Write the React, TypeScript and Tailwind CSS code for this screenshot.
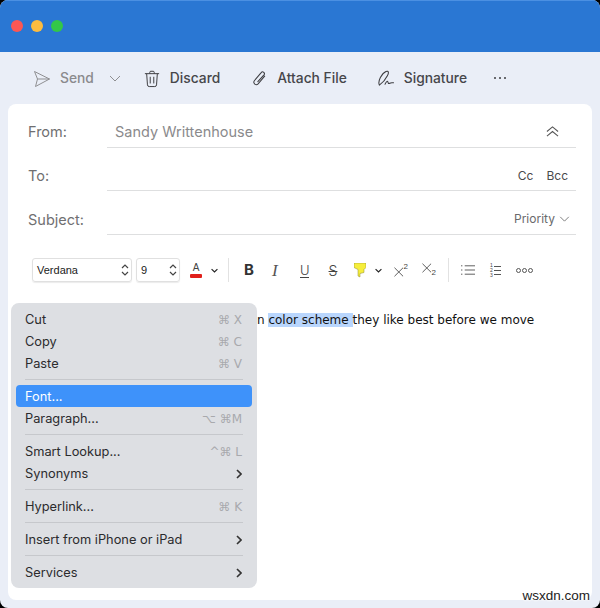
import React from 'react';

const sans = "font-['Inter','Noto_Sans',sans-serif]";

type MenuRow = { label: string; keys?: string; arrow?: boolean; active?: boolean } | 'sep';

const menu: MenuRow[] = [
  { label: 'Cut', keys: '⌘ X' },
  { label: 'Copy', keys: '⌘ C' },
  { label: 'Paste', keys: '⌘ V' },
  'sep',
  { label: 'Font...', active: true },
  { label: 'Paragraph...', keys: '⌥ ⌘M' },
  'sep',
  { label: 'Smart Lookup...', keys: '^⌘ L' },
  { label: 'Synonyms', arrow: true },
  'sep',
  { label: 'Hyperlink...', keys: '⌘ K' },
  'sep',
  { label: 'Insert from iPhone or iPad', arrow: true },
  'sep',
  { label: 'Services', arrow: true },
];

const Chevron = ({ className = '', weight = 1 }: { className?: string; weight?: number }) => (
  <svg viewBox="0 0 12 7" className={className} fill="none" stroke="currentColor" strokeWidth={weight}>
    <path d="M1 1l5 5 5-5" />
  </svg>
);

const Stepper = () => (
  <svg viewBox="0 0 8 14" className="w-[8px] h-[14px] text-[#444]" fill="none" stroke="currentColor" strokeWidth="1.2">
    <path d="M1 5l3-3 3 3M1 9l3 3 3-3" />
  </svg>
);

const Field = ({ label, height, pad, labelPad = 'pt-[18px]', children }: { label: string; height: string; pad: string; labelPad?: string; children?: React.ReactNode }) => (
  <div className={`flex pl-[20px] pr-[16px] ${height}`}>
    <div className={`w-[79px] text-[14.5px] leading-[20px] text-[#6f6f71] ${labelPad}`}>{label}</div>
    <div className={`flex-1 flex items-center justify-between border-b border-[#dedfe0] ${pad}`}>{children}</div>
  </div>
);

const Sep = () => <div className="w-px h-[24px] bg-[#e2e2e2]" />;

const CrossIcon = () => (
  <svg viewBox="0 0 10 10" className="w-[10px] h-[10px] text-[#444]" fill="none" stroke="currentColor" strokeWidth=".9">
    <path d="M.5.5l9 9M9.500.5l-9 9" />
  </svg>
);

export default function App() {
  return (
    <div className={`w-[600px] h-[608px] bg-black relative overflow-hidden ${sans}`}>
      <div className="h-full rounded-[8px] bg-[#eaeef7] overflow-hidden flex flex-col">
        <div className="h-[52px] bg-[#2a77d3] border-t border-[#4b90e2] flex items-center pl-[11px] pb-[1px] gap-[8px] shrink-0">
          <span className="w-[12px] h-[12px] rounded-full bg-[#fc5753]" />
          <span className="w-[12px] h-[12px] rounded-full bg-[#fdbc40]" />
          <span className="w-[12px] h-[12px] rounded-full bg-[#33c748]" />
        </div>

        <div className="h-[52px] flex items-center pl-[33px] pt-[1px] text-[13.8px] font-medium text-[#46464a] shrink-0">
          <svg viewBox="0 0 18 18" className="w-[18px] h-[18px] text-[#8f8f92]" fill="none" stroke="currentColor" strokeWidth="1">
            <path d="M1.500 1.500L16.500 9 2.500 16.500 4.500 9zM4.500 9h12" strokeLinejoin="round" />
          </svg>
          <span className="ml-[9px] text-[#8a8a8d]">Send</span>
          <Chevron className="w-[12px] h-[7px] ml-[15px] text-[#8f8f92]" />
          <svg viewBox="0 0 18 20" className="w-[16px] h-[18px] ml-[23px] text-[#3c3c40]" fill="none" stroke="currentColor" strokeWidth="1.100">
            <path d="M1 4h16M6.500 4V2.500A1.200 1.200 0 017.700 1.300h2.600a1.200 1.200 0 011.200 1.200V4M3 4l.9 12.600a2 2 0 002 1.900h6.200a2 2 0 002-1.900L15 4M7 7.500v7.500M11 7.500v7.500" />
          </svg>
          <span className="ml-[10px]">Discard</span>
          <svg viewBox="0 0 16 18" className="w-[15px] h-[17px] ml-[32px] text-[#3c3c40]" fill="none" stroke="currentColor" strokeWidth="1.100">
            <path d="M13.500 6.500l-7 8.200a2.600 2.600 0 01-4-3.300l7.300-8.700a1.900 1.900 0 013 2.400L6.200 12.300" strokeLinecap="round" />
          </svg>
          <span className="ml-[10px]">Attach File</span>
          <svg viewBox="0 0 18 18" className="w-[17px] h-[17px] ml-[30px] text-[#3c3c40]" fill="none" stroke="currentColor" strokeWidth="1.100">
            <path d="M2.500 16C.5 12 5 3.500 9.500 1.500c2.500-1 3.500 1 1.500 4.500-1.500 3-5 7.500-8.500 10zM8.500 15c1-2 2.500-4 3-2.500s.5 2.500 2 1.500 2.500-.5 4-.5" strokeLinecap="round" strokeLinejoin="round" />
          </svg>
          <span className="ml-[10px]">Signature</span>
          <span className="flex gap-[3px] ml-[27px] -mt-[2px]">
            <span className="w-[2px] h-[2px] rounded-full bg-[#3c3c40]" />
            <span className="w-[2px] h-[2px] rounded-full bg-[#3c3c40]" />
            <span className="w-[2px] h-[2px] rounded-full bg-[#3c3c40]" />
          </span>
        </div>

        <div className="mx-[8px] h-[496px] bg-white rounded-[8px] shrink-0">
          <Field label="From:" height="h-[44px]" pad="pt-[12px] pl-[8px] pr-[17px]">
            <span className="text-[14.5px] text-[#8a8a8c]">Sandy Writtenhouse</span>
            <svg viewBox="0 0 14 14" className="w-[13px] h-[13px] text-[#555]" fill="none" stroke="currentColor" strokeWidth="1.100">
              <path d="M1 7l6-5 6 5M1 12l6-5 6 5" />
            </svg>
          </Field>
          <Field label="To:" height="h-[43px]" pad="pt-[14px]">
            <span />
            <span className="flex gap-[13px] pr-[8px] text-[12px] text-[#4a4a4c]">
              <span>Cc</span>
              <span>Bcc</span>
            </span>
          </Field>
          <Field label="Subject:" height="h-[44px]" pad="pt-[13px]" labelPad="pt-[19px]">
            <span />
            <span className="flex items-center gap-[4px] pr-[6px] text-[12px] text-[#6a6a6c]">
              Priority
              <Chevron className="w-[11px] h-[6px]" />
            </span>
          </Field>

          <div className="h-[36px] mt-[17px] flex items-center pl-[24px] font-['Liberation_Sans',sans-serif]">
            <div className="w-[100px] h-[24px] rounded-[3px] border border-[#e0e0e0] shadow-[0_1px_1px_rgba(0,0,0,0.08)] flex items-center justify-between pl-[4px] pr-[2px] text-[11px] text-[#222]">
              Verdana
              <Stepper />
            </div>
            <div className="w-[44px] h-[24px] ml-[4px] rounded-[3px] border border-[#e0e0e0] shadow-[0_1px_1px_rgba(0,0,0,0.08)] flex items-center justify-between pl-[4px] pr-[2px] text-[11px] text-[#222]">
              9
              <Stepper />
            </div>
            <span className="w-[12px] ml-[10px] flex flex-col items-center">
              <span className="text-[10px] leading-[9px] text-[#444]">A</span>
              <span className="w-[12px] h-[4px] mt-[2px] rounded-[1px] bg-[#e0201b]" />
            </span>
            <Chevron className="w-[7px] h-[5px] ml-[9px] text-[#222]" weight={2} />
            <span className="ml-[10px]"><Sep /></span>
            <span className="ml-[15px] w-[10px] text-[15px] font-bold text-[#333] font-['Inter',sans-serif]">B</span>
            <span className="ml-[18px] w-[10px] text-[17px] leading-[17px] italic text-[#555] font-['Liberation_Serif',serif]">I</span>
            <span className="ml-[18px] w-[9px] h-[15px] text-[13px] leading-[14px] text-[#444] font-light border-b border-[#444] text-center font-['Inter',sans-serif]">U</span>
            <span className="ml-[18px] w-[12px] text-[14px] text-[#444] font-light line-through text-center font-['Inter',sans-serif]">S</span>
            <svg viewBox="0 0 12 15" className="w-[12px] h-[15px] ml-[15px]" fill="#f6ee3c" stroke="#8f8a30" strokeWidth=".5">
              <path d="M0 0h12v4.500l-2 2v3l-4 1v3.500l-2-1V6.500l-4-2z" />
            </svg>
            <Chevron className="w-[7px] h-[5px] ml-[9px] text-[#222]" weight={2} />
            <span className="ml-[12px] w-[14px] h-[14px] flex items-end">
              <CrossIcon />
              <span className="self-start text-[8px] leading-[8px] text-[#444]">2</span>
            </span>
            <span className="ml-[14px] w-[14px] h-[14px] flex items-start">
              <CrossIcon />
              <span className="self-end text-[8px] leading-[8px] text-[#444]">2</span>
            </span>
            <span className="ml-[12px]"><Sep /></span>
            <svg viewBox="0 0 15 12" className="w-[14px] h-[12px] ml-[12px] text-[#555]" fill="none" stroke="currentColor" strokeWidth="1">
              <path d="M4 1.500h11M4 6h11M4 10.500h11M0 1.500h1.500M0 6h1.500M0 10.500h1.500" />
            </svg>
            <span className="ml-[15px] w-[12px] flex items-center gap-[1px]">
              <span className="flex flex-col text-[5px] leading-[5px] text-[#444]">
                <span>1</span>
                <span>2</span>
                <span>3</span>
              </span>
              <span className="flex flex-col gap-[3px]">
                <span className="w-[7px] h-px bg-[#555]" />
                <span className="w-[7px] h-px bg-[#555]" />
                <span className="w-[7px] h-px bg-[#555]" />
              </span>
            </span>
            <span className="flex gap-[1px] ml-[14px]">
              <span className="w-[5px] h-[5px] rounded-full border border-[#555]" />
              <span className="w-[5px] h-[5px] rounded-full border border-[#555]" />
              <span className="w-[5px] h-[5px] rounded-full border border-[#555]" />
            </span>
          </div>

          <div className="mt-[23px] pl-[249px] text-[12px] leading-[18px] text-[#111] font-['DejaVu_Sans',sans-serif] whitespace-nowrap overflow-hidden">
            n <span className="bg-[#b9d6fd]">color scheme </span>they like best before we move
          </div>
        </div>
      </div>

      <div className="absolute left-[11px] top-[303px] w-[246px] rounded-[8px] bg-[#dddfe3] p-[5px] text-[12.8px] text-[#2b2b2d]">
        {menu.map((row, i) =>
          row === 'sep' ? (
            <div key={i} className="h-[11px] flex items-center px-[9px]">
              <div className="h-px w-full bg-[#c6c8cc]" />
            </div>
          ) : (
            <div
              key={i}
              className={`h-[22px] flex items-center justify-between pl-[9px] pr-[10px] pt-[1px] rounded-[4px] ${row.active ? 'bg-[#3e92fa] text-white' : ''}`}
            >
              <span>{row.label}</span>
              {row.keys && <span className="text-[#a8a9ad] text-[12px] font-['DejaVu_Sans',sans-serif]">{row.keys}</span>}
              {row.arrow && (
                <svg viewBox="0 0 6 10" className="w-[6px] h-[10px] text-[#333]" fill="none" stroke="currentColor" strokeWidth="1.600">
                  <path d="M1 1l4 4-4 4" />
                </svg>
              )}
            </div>
          )
        )}
      </div>

      <span className="absolute right-[10px] top-[588px] text-[13.5px] leading-[16px] text-[#222] font-['Liberation_Sans',sans-serif] [text-shadow:0_0_3px_#fff,0_0_3px_#fff,0_0_3px_#fff]">
        wsxdn.com
      </span>
    </div>
  );
}
